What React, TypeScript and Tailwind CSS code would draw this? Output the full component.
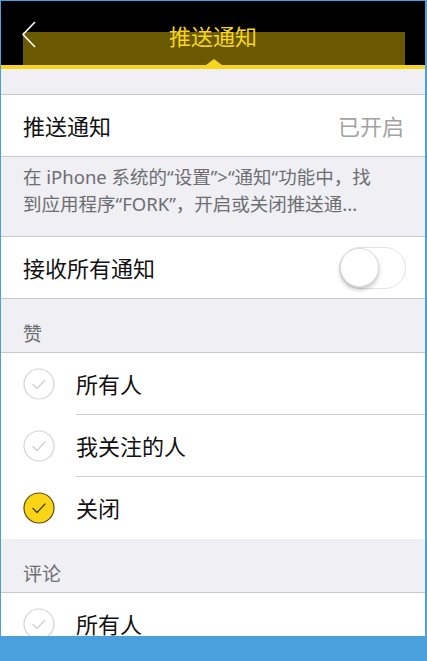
import React, { useState } from "react";

interface Option {
  label: string;
  checked: boolean;
}

const CheckCircle: React.FunctionComponent<{ checked: boolean }> = ({ checked }) => (
  <svg width="32" height="32" viewBox="0 0 32 32" className="shrink-0">
    <circle
      cx="16"
      cy="16"
      r="15"
      fill={checked ? "#fad416" : "#ffffff"}
      stroke={checked ? "#5a4a17" : "#d4d4d4"}
      strokeWidth="1.2"
    />
    <path
      d="M10 16.5 L14 20.5 L22 12"
      fill="none"
      stroke={checked ? "#4a3c12" : "#cfcfcf"}
      strokeWidth="1.3"
      strokeLinecap="round"
      strokeLinejoin="round"
    />
  </svg>
);

const OptionList: React.FunctionComponent<{ options: Option[] }> = ({ options }) => (
  <div className="bg-white">
    {options.map((option, i) => (
      <div key={option.label} className="flex h-[62px] items-center pl-[22px]">
        <CheckCircle checked={option.checked} />
        <div
          className={`ml-[21px] flex h-full flex-1 items-center ${
            i < options.length - 1 ? "border-b border-[#cfcfd3]" : ""
          }`}
        >
          <span className="text-[22px] leading-[28px] text-[#111]">{option.label}</span>
        </div>
      </div>
    ))}
  </div>
);

const SectionHeader: React.FunctionComponent<{ title: string }> = ({ title }) => (
  <div className="h-[54px] border-b border-[#c8c7cc] bg-[#efeff4] pl-[22px] pt-[24px]">
    <span className="text-[19px] leading-[22px] text-[#6d6d72]">{title}</span>
  </div>
);

export default function App() {
  const [receiveAll, setReceiveAll] = useState(false);

  return (
    <div className="h-[661px] w-[427px] bg-[#4aa0dc] pl-px pr-[2px] pt-px font-['Noto_Sans','Noto_Sans_CJK_SC',sans-serif]">
      <div className="h-[635px] overflow-hidden bg-[#efeff4]">
        {/* nav bar */}
        <div className="relative h-[64px] bg-black">
          <div className="absolute bottom-0 left-[22px] right-[20px] h-[33px] bg-[#6b5900]" />
          <div className="relative flex h-full items-start justify-center pt-[22px]">
            <svg
              width="16"
              height="28"
              viewBox="0 0 16 28"
              className="absolute left-[20px] top-[20px]"
            >
              <path d="M14 1 L2 13.5 L14 26" fill="none" stroke="#ffffff" strokeWidth="1.6" />
            </svg>
            <span className="text-[22px] leading-[26px] text-[#f8d51c]">推送通知</span>
          </div>
          <div className="absolute bottom-0 left-[205px] h-0 w-0 border-x-[8px] border-b-[6px] border-x-transparent border-b-[#f8d51c]" />
        </div>
        <div className="h-[4px] bg-[#f8d51c]" />

        <div className="h-[26px] border-b border-[#c8c7cc]" />

        <div className="flex h-[62px] items-center justify-between border-b border-[#c8c7cc] bg-white pl-[22px] pr-[21px]">
          <span className="text-[22px] leading-[28px] text-[#111]">推送通知</span>
          <span className="text-[22px] leading-[28px] text-[#a3a3a3]">已开启</span>
        </div>

        <div className="h-[80px] border-b border-[#c8c7cc] pl-[22px] pr-[20px] pt-[6px] text-[18.5px] leading-[27px] text-[#6d6d72]">
          <div className="whitespace-nowrap">在 iPhone 系统的“设置”&gt;“通知“功能中，找</div>
          <div className="whitespace-nowrap">到应用程序“FORK”，开启或关闭推送通...</div>
        </div>

        <div className="flex h-[62px] items-center justify-between border-b border-[#c8c7cc] bg-white pl-[22px] pr-[19px]">
          <span className="text-[22px] leading-[28px] text-[#111]">接收所有通知</span>
          <button
            type="button"
            onClick={() => setReceiveAll(!receiveAll)}
            className={`flex h-[42px] w-[67px] items-center rounded-full border border-[#e2e2e2] ${
              receiveAll ? "justify-end bg-[#f8d51c]" : "justify-start bg-white"
            }`}
          >
            <span className="h-[39px] w-[39px] rounded-full border border-[#dcdcdc] bg-white shadow-[0_3px_4px_rgba(0,0,0,0.22)]" />
          </button>
        </div>

        <SectionHeader title="赞" />
        <OptionList
          options={[
            { label: "所有人", checked: false },
            { label: "我关注的人", checked: false },
            { label: "关闭", checked: true },
          ]}
        />

        <SectionHeader title="评论" />
        <OptionList options={[{ label: "所有人", checked: false }]} />
      </div>
    </div>
  );
}
